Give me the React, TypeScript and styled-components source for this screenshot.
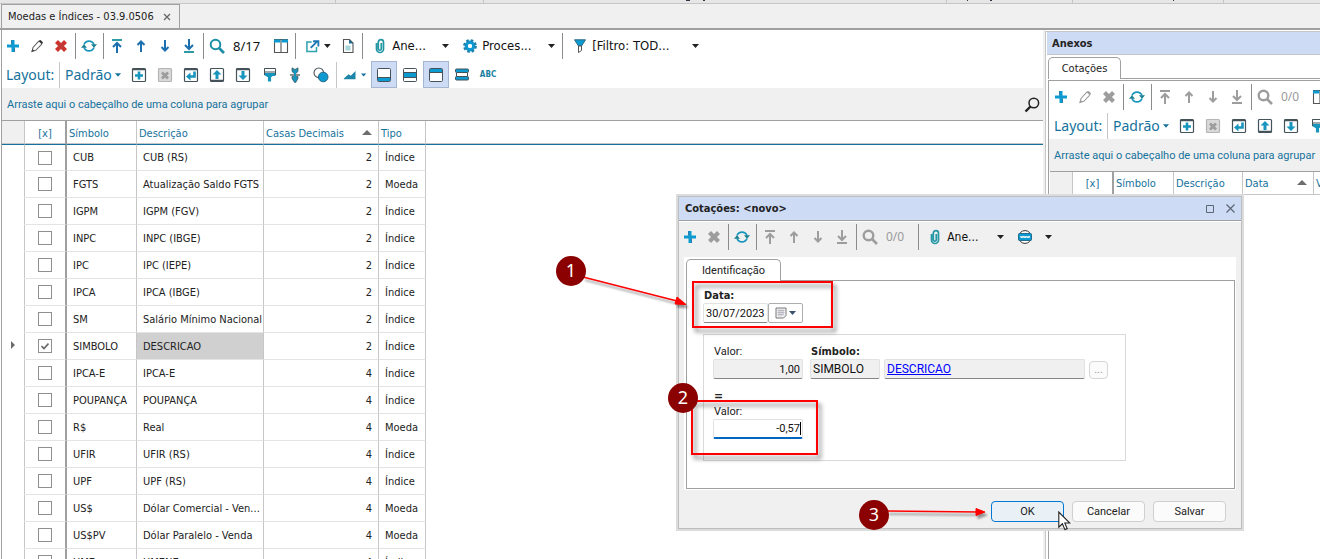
import React from "react";
import styled, { createGlobalStyle, css } from "styled-components";

const UI_FONT = '"DejaVu Sans Condensed", "Noto Sans", sans-serif';
const LIGHT_FONT = '"Noto Sans", "Open Sans", sans-serif';
const FORM_FONT = 'Roboto, "Liberation Sans", sans-serif';

const c = {
  blue: "#16729c",
  teal: "#1795bd",
  bright: "#0d9ad0",
  gray: "#9d9d9d",
  line: "#a0a0a0",
  cell: "#c6c6c6",
  panel: "#f0f0f0",
  title: "#cddbf5",
  ink: "#222222",
  dark: "#44525a",
};

const GlobalStyle = createGlobalStyle`
  * { box-sizing: border-box; }
  body { margin: 0; background: #fff; color: ${c.ink}; font: 11px/14px ${UI_FONT}; }
  button, input { font: inherit; color: inherit; margin: 0; }
`;

const Screen = styled.div`
  position: relative;
  display: flex;
  flex-direction: column;
  height: 100vh;
  overflow: hidden;
`;

const TopStrip = styled.div`
  display: flex;
  height: 4px;
  flex: none;
  background: #e6e6e6;
  border-bottom: 1px solid ${c.cell};
`;

const StripCell = styled.div<{ $w?: number }>`
  display: flex;
  flex: ${(p) => (p.$w ? `0 0 ${p.$w}px` : "1")};
  border-right: ${(p) => (p.$w ? `1px solid ${c.cell}` : "0")};
`;

const Speck = styled.i<{ $gap: number; $w: number }>`
  width: ${(p) => p.$w}px;
  height: 1px;
  margin-left: ${(p) => p.$gap}px;
  background: #3a2f45;
`;

const DocTabs = styled.nav`
  display: flex;
  align-items: flex-end;
  height: 26px;
  flex: none;
  padding-left: 1px;
  background: ${c.panel};
  border-bottom: 2px solid ${c.line};
`;

const DocTab = styled.div`
  display: flex;
  align-items: center;
  gap: 5px;
  height: 24px;
  padding: 1px 4px 0 6px;
  white-space: nowrap;
  border: 1px solid ${c.line};
  border-bottom: 0;
`;

const PlainButton = styled.button`
  display: flex;
  align-items: center;
  justify-content: center;
  border: 0;
  padding: 0;
  background: none;
`;

const CloseButton = styled(PlainButton)`
  width: 16px;
  height: 16px;
`;

const Workspace = styled.div`
  display: flex;
  flex: 1;
  min-height: 0;
`;

const MainPane = styled.main`
  flex: 1;
  min-width: 0;
  margin-left: 1px;
  box-shadow: inset 1px 0 ${c.line};
  overflow: hidden;
`;

const SidePane = styled.aside`
  flex: 0 0 277px;
  border-left: 2px solid ${c.panel};
  overflow: hidden;
`;

const SideBox = styled.section`
  height: 100%;
  margin-top: 1px;
  border-left: 1px solid ${c.cell};
  border-top: 1px solid ${c.cell};
`;

const SideTitle = styled.h2`
  margin: 0 0 0 1px;
  height: 23px;
  padding: 0 5px;
  background: ${c.title};
  border-bottom: 1px solid ${c.cell};
  font-size: 11px;
  line-height: 23px;
`;

const TabRow = styled.div`
  display: flex;
  height: 22px;
  align-items: stretch;
`;

const Tab = styled.div<{ $w: number }>`
  width: ${(p) => p.$w}px;
  border: 1px solid ${c.line};
  border-bottom: 0;
  border-radius: 5px 5px 0 0;
  text-align: center;
  line-height: 21px;
`;

const TabFill = styled.div`
  flex: 1;
  border-bottom: 1px solid ${c.line};
`;

const SideTabs = styled.div`
  padding: 2px 0 0 2px;
  height: 100%;
`;

const SideBody = styled.div`
  height: 100%;
  border-left: 1px solid ${c.line};
`;

const SideGrid = styled.div`
  margin-top: 1px;
  border-top: 1px solid ${c.line};
`;

const ToolRow = styled.div<{ $h: number }>`
  display: flex;
  align-items: center;
  height: ${(p) => p.$h}px;
  white-space: nowrap;
`;

const Tool = styled(PlainButton)<{ $wide?: boolean; $on?: boolean }>`
  flex: 0 0 ${(p) => (p.$wide ? 26 : 24)}px;
  height: 27px;
  ${(p) =>
    p.$on &&
    css`
      background: ${c.title};
      border: 1px solid #a6b5d2;
    `}
`;

const Sep = styled.span<{ $light?: boolean; $gap?: number }>`
  flex: 0 0 4px;
  height: 26px;
  margin-left: ${(p) => p.$gap || 0}px;
  background: linear-gradient(${(p) => (p.$light ? c.cell : "#8c8c8c")}, ${(p) => (p.$light ? c.cell : "#8c8c8c")}) 2px 0 / 1px 100% no-repeat;
`;

const Counter = styled.span<{ $off?: boolean }>`
  padding: 0 9px 0 4px;
  font-size: ${(p) => (p.$off ? 12 : 13)}px;
  color: ${(p) => (p.$off ? "#9a9a9a" : "#111")};
  font-family: ${LIGHT_FONT};
`;

const MenuButton = styled(PlainButton)<{ $w: number; $tight?: boolean }>`
  width: ${(p) => p.$w}px;
  height: 26px;
  padding: 0 5px 0 ${(p) => (p.$tight ? 5 : 8)}px;
  justify-content: flex-start;
  gap: 4px;
  font: 13px/18px ${UI_FONT};
  color: #111;

  svg:last-child {
    margin-left: auto;
  }
`;

const LayoutLabel = styled.span`
  flex: 0 0 56px;
  padding-left: 5px;
  font: 14px/20px ${LIGHT_FONT};
  color: ${c.blue};
`;

const LayoutPick = styled(PlainButton)`
  flex: 0 0 65px;
  justify-content: flex-start;
  gap: 3px;
  padding-left: 4px;
  font: 14px/20px ${LIGHT_FONT};
  color: ${c.blue};
`;

const GroupBar = styled.div<{ $side?: boolean }>`
  display: flex;
  align-items: center;
  justify-content: space-between;
  height: 32px;
  margin-left: ${(p) => (p.$side ? 0 : 1)}px;
  padding: 2px 3px 0 5px;
  background: ${c.panel};
  color: ${c.blue};
  font-family: ${FORM_FONT};
  white-space: nowrap;
`;

const GridWrap = styled.div`
  margin-left: 1px;
  border-top: 1px solid ${c.line};
`;

const Grid = styled.table<{ $w: number }>`
  width: ${(p) => p.$w}px;
  table-layout: fixed;
  border-collapse: separate;
  border-spacing: 0;
`;

const Th = styled.th<{ $mark?: boolean; $thick?: boolean; $center?: boolean }>`
  height: 22px;
  padding: 2px 2px 0;
  border-right: ${(p) => (p.$thick ? `2px solid ${c.line}` : `1px solid ${c.cell}`)};
  background: ${(p) => (p.$mark ? c.panel : "#fff")};
  color: ${c.blue};
  font-weight: 400;
  text-align: ${(p) => (p.$center ? "center" : "left")};
  overflow: hidden;
  white-space: nowrap;

  svg {
    float: right;
    margin: 3px 4px 0 0;
  }
`;

const Td = styled.td<{ $thick?: boolean; $align?: string; $sel?: boolean; $mark?: boolean }>`
  height: 27px;
  padding: ${(p) => (p.$align === "center" ? "0" : "1px 6px 0")};
  border-right: ${(p) => (p.$thick ? `2px solid ${c.line}` : `1px solid ${c.cell}`)};
  border-bottom: 1px solid ${(p) => (p.$mark ? "#fff" : "#e4e4e4")};
  background: ${(p) => (p.$sel ? "#d0d0d0" : "#fff")};
  text-align: ${(p) => p.$align || "left"};
  overflow: hidden;
  text-overflow: ellipsis;
  white-space: nowrap;
`;

const DescTd = styled(Td)`
  padding-right: 0;
`;

const Check = styled.input`
  appearance: none;
  display: block;
  width: 14px;
  height: 14px;
  border: 1px solid #8f8f8f;
  background: #fff;
`;

const CheckLabel = styled.label`
  display: grid;
  justify-content: center;

  > * {
    grid-area: 1 / 1;
  }

  svg {
    margin: 3px;
    pointer-events: none;
  }
`;

/* ---- floating dialog ---- */

const Dialog = styled.section`
  position: absolute;
  left: 676px;
  top: 194px;
  width: 568px;
  border: 2px solid #dcdcdc;
  font-family: ${FORM_FONT};
`;

const DialogInner = styled.div`
  border: 1px solid #bebebe;
  background: ${c.panel};
`;

const DialogTitle = styled.header`
  display: flex;
  align-items: center;
  height: 24px;
  padding: 0 1px 0 6px;
  background: ${c.title};
  border-bottom: 1px solid ${c.line};
  box-shadow: 0 1px #fff;

  h2 {
    flex: 1;
    margin: 0;
    font: bold 11px/14px ${UI_FONT};
  }
`;

const TitleButton = styled(PlainButton)`
  width: 20px;
  height: 20px;
`;

const DialogTools = styled(ToolRow)`
  margin-left: -1px;
  padding-bottom: 4px;
`;

const DialogMenu = styled(MenuButton)`
  padding: 0 6px 0 7px;
  font-size: 12px;
`;

const DialogBody = styled.div`
  margin: 0 5px;
  padding: 2px 1px 1px 2px;
  background: #fff;
`;

const Sheet = styled.div`
  height: 208px;
  padding: 8px 16px;
  border: 1px solid ${c.line};
  border-top: 0;
`;

const FieldLabel = styled.label<{ $strong?: boolean }>`
  display: block;
  height: 14px;
  padding-left: 1px;
  font: ${(p) => (p.$strong ? `bold 11px/14px ${UI_FONT}` : `11px/14px ${FORM_FONT}`)};
`;

const Field = styled.input<{ $w: number; $num?: boolean; $right?: boolean; $focus?: boolean }>`
  display: block;
  width: ${(p) => p.$w}px;
  height: 20px;
  padding: 0 2px;
  border: 1px solid #e2e2e2;
  border-bottom: ${(p) => (p.$focus ? "2px solid #0067c0" : "1px solid #868686")};
  border-radius: 2px;
  outline: 0;
  background: #fff;
  color: #111;
  text-align: ${(p) => (p.$right ? "right" : "left")};
  font: ${(p) => (p.$num ? 11 : 12)}px/16px ${FORM_FONT};

  &:read-only {
    background: ${c.panel};
  }
`;

const LinkField = styled.div`
  width: 201px;
  height: 20px;
  padding: 1px 2px;
  border: 1px solid #e2e2e2;
  border-bottom-color: #868686;
  border-radius: 2px;
  background: ${c.panel};
  font: 12px/16px ${FORM_FONT};

  a {
    color: #0000ff;
  }
`;

const CaretBox = styled.div`
  position: relative;
  width: 90px;

  &::after {
    content: "";
    position: absolute;
    right: 2px;
    top: 3px;
    width: 1px;
    height: 13px;
    background: #000;
  }
`;

const DateRow = styled.div`
  display: flex;
`;

const DateButton = styled(PlainButton)`
  width: 35px;
  height: 20px;
  gap: 2px;
  border: 1px solid #adadad;
  border-radius: 2px;
  background: #fff;
`;

const RateBox = styled.fieldset`
  width: 423px;
  height: 127px;
  margin: 11px 0 0;
  padding: 10px 9px;
  border: 1px solid #d9d9d9;
`;

const FieldRow = styled.div`
  display: flex;
  align-items: flex-end;
`;

const FieldCol = styled.div<{ $gap: number }>`
  margin-right: ${(p) => p.$gap}px;
`;

const MoreButton = styled(PlainButton)`
  width: 19px;
  height: 18px;
  border: 1px solid #d6d6d6;
  border-radius: 4px;
  background: #fbfbfb;
  color: #999;
`;

const Equals = styled.div`
  height: 17px;
  margin-top: 9px;
  padding-left: 1px;
  font: bold 12px/16px ${UI_FONT};
`;

const Footer = styled.footer`
  display: flex;
  justify-content: flex-end;
  gap: 8px;
  padding: 11px 15px 6px;
`;

const DialogButton = styled.button<{ $primary?: boolean }>`
  width: 73px;
  height: 21px;
  padding: 0;
  border: 1px solid ${(p) => (p.$primary ? "#0078d4" : "#cfcfcf")};
  border-radius: 4px;
  background: ${(p) => (p.$primary ? "#e9f0f6" : "#fbfbfb")};
  font: 11px/16px ${FORM_FONT};
`;

/* ---- callouts drawn over the window ---- */

const Highlight = styled.div<{ $x: number; $y: number; $w: number; $h: number }>`
  position: absolute;
  left: ${(p) => p.$x}px;
  top: ${(p) => p.$y}px;
  width: ${(p) => p.$w}px;
  height: ${(p) => p.$h}px;
  border: 2px solid #f00;
  filter: drop-shadow(3px 4px 2px rgba(0, 0, 0, 0.5));
  pointer-events: none;
`;

const Badge = styled.div<{ $x: number; $y: number }>`
  position: absolute;
  left: ${(p) => p.$x}px;
  top: ${(p) => p.$y}px;
  width: 30px;
  height: 30px;
  border-radius: 50%;
  background: #8b0000;
  color: #fff;
  text-align: center;
  font: 18px/29px ${LIGHT_FONT};
`;

const ArrowLayer = styled.svg<{ $x: number; $y: number }>`
  position: absolute;
  left: ${(p) => p.$x}px;
  top: ${(p) => p.$y}px;
  filter: drop-shadow(2px 3px 1px rgba(0, 0, 0, 0.4));
  pointer-events: none;
`;

const Pointer = styled.svg`
  position: absolute;
  left: 1058px;
  top: 511px;
`;

/* ---- icons ---- */

type IconProps = { off?: boolean };

const Svg = ({ children, s = 16 }: { children: React.ReactNode; s?: number }) => (
  <svg width={s} height={s} viewBox={`0 0 ${s} ${s}`} fill="none" aria-hidden="true">
    {children}
  </svg>
);

const PlusIcon = () => (
  <Svg>
    <path d="M8 2v12M2 8h12" stroke={c.bright} strokeWidth="3" />
    <path d="M6.500 2v4.500M9.500 9.500v4.500" stroke="#2f7fae" strokeWidth="1" />
  </Svg>
);
const PencilIcon = ({ off }: IconProps) => (
  <Svg>
    <path d="M3 13.500l1-4 5.500-6c1-1 2-1 3 0s.8 1.800 0 2.800l-5.700 6z" stroke={off ? c.gray : "#666"} strokeWidth="1.100" />
    <path d="M10.500 2.700l2.800 2.500" stroke={off ? c.gray : "#333"} strokeWidth="2" />
    <path d="M2.500 14l1-3 2 1.800z" fill={off ? c.gray : "#444"} />
  </Svg>
);
const CrossIcon = ({ off }: IconProps) => (
  <Svg>
    <path d="M3.500 3.500l9 9M12.500 3.500l-9 9" stroke={off ? c.gray : "#d0312d"} strokeWidth="4.200" />
    <path d="M5 5l6 6M11 5l-6 6" stroke={off ? c.gray : "#c13a36"} strokeWidth="3" />
  </Svg>
);
const RefreshIcon = () => (
  <Svg>
    <path d="M3 6.500A5.400 5.400 0 0 1 13 6.500M13 9.500A5.400 5.400 0 0 1 3 9.500" stroke={c.teal} strokeWidth="1.700" />
    <path d="M10 6.200h6l-3 3.600zM0 9.800h6L3 6.200z" fill="#1b7f8e" />
  </Svg>
);
const ArrowIcon = ({ off, down, bar }: IconProps & { down?: boolean; bar?: boolean }) => {
  const col = off ? c.gray : "#1b6fae";
  return (
    <Svg>
      <g transform={down ? "rotate(180 8 8)" : undefined}>
        {bar && <path d="M3 2h10" stroke={off ? c.gray : "#2f9ba5"} strokeWidth="2" />}
        <path d={bar ? "M8 15V5" : "M8 14V3.500"} stroke={col} strokeWidth="2" />
        <path d={bar ? "M4 9l4-4 4 4" : "M4.500 7L8 3.500 11.500 7"} stroke={col} strokeWidth="2" />
      </g>
    </Svg>
  );
};
const SearchIcon = ({ off }: IconProps) => (
  <Svg>
    <circle cx="6.500" cy="6.500" r="4.800" stroke={off ? c.gray : "#1b8fa6"} strokeWidth={off ? 2.4 : 2} />
    <path d="M10 10l5 5" stroke={off ? c.gray : "#1b8fa6"} strokeWidth="2.600" />
  </Svg>
);
const ColumnsIcon = () => (
  <Svg>
    <path d="M1.500 1.500h13v13h-13zM8 1.500v13" stroke="#555" strokeWidth="1.100" />
    <path d="M1 3h6.300M8.700 3h6.300" stroke={c.bright} strokeWidth="3" />
  </Svg>
);
const ExportIcon = () => (
  <Svg>
    <path d="M7 3.800H2v10h10V9" stroke="#2fa3b0" strokeWidth="1.600" />
    <path d="M6 10L12.500 3.500M8.500 3h5.500v5.500" stroke="#1b76b2" strokeWidth="1.900" />
  </Svg>
);
const PageIcon = () => (
  <Svg>
    <path d="M3.500 1.500h6l3.500 3.500v9.500h-9.500z" stroke="#555" strokeWidth="1.100" />
    <path d="M9 1.500v4h4.500z" fill="#1b6f93" />
    <path d="M5.500 7.500h5v5h-5z" fill="#a8d5d8" />
  </Svg>
);
const ClipIcon = () => (
  <Svg>
    <path d="M4.500 5v6a3.500 3.500 0 0 0 7 0V4.300a2.600 2.600 0 0 0-5.200 0v6.400a1.500 1.500 0 0 0 3 0V5" stroke="#2497a5" strokeWidth="1.700" />
  </Svg>
);
const GearIcon = () => (
  <Svg>
    <circle cx="8" cy="8" r="3.700" stroke={c.bright} strokeWidth="3.400" />
    <circle cx="8" cy="8" r="5.700" stroke="#1e7fb0" strokeWidth="2.400" strokeDasharray="2.600 1.877" />
    <circle cx="8" cy="8" r="2" fill="#fff" />
  </Svg>
);
const FunnelIcon = () => (
  <Svg>
    <path d="M2.500 1.800h11L9.500 8H6.500z" fill={c.bright} stroke="#2c6a87" />
    <path d="M6.500 8h3v4.500l-3 2z" fill="#fff" stroke="#555" />
  </Svg>
);
const WebIcon = () => (
  <Svg>
    <circle cx="8" cy="8" r="6.400" fill="#fff" stroke="#333" />
    <rect x="1.500" y="4.500" width="13" height="7" rx="1" fill={c.bright} stroke="#256d8c" />
    <path d="M3.500 7l.8 2 .8-2 .8 2 .8-2M7.300 9l.7-2 .8 2 .8-2M10.400 9l.7-2 .8 2 .8-2" stroke="#fff" strokeWidth=".9" />
  </Svg>
);
const Caret = ({ color = "#222", w = 7 }: { color?: string; w?: number }) => (
  <svg width={w} height="4" viewBox="0 0 7 4" aria-hidden="true">
    <path d="M0 0h7L3.500 4z" fill={color} />
  </svg>
);
const Frame = ({ children, off }: { children?: React.ReactNode; off?: boolean }) => (
  <Svg>
    <rect x="1.500" y="1.500" width="13" height="13" rx="1" stroke={off ? "#b5b5b5" : "#44525a"} strokeWidth="1.200" fill={off ? "#d9d9d9" : "#fff"} />
    {children}
  </Svg>
);
const FrameAdd = () => (
  <Frame>
    <path d="M2 2.500h12" stroke={c.dark} strokeWidth="1.500" />
    <path d="M8 4.500v8M4 8.500h8" stroke={c.teal} strokeWidth="2.600" />
  </Frame>
);
const FrameDelete = () => (
  <Frame off>
    <path d="M5 5.500l6 6M11 5.500l-6 6" stroke={c.gray} strokeWidth="2.800" />
  </Frame>
);
const FrameReturn = () => (
  <Frame>
    <path d="M2 2.500h12" stroke={c.dark} strokeWidth="1.500" />
    <path d="M11.500 4.500v5H6" stroke={c.teal} strokeWidth="2.600" />
    <path d="M3 9.500l4.500-4v8z" fill={c.teal} />
  </Frame>
);
const FrameArrow = ({ down }: { down?: boolean }) => (
  <Frame>
    <path d={down ? "M2 2.500h12" : "M2 13.500h12"} stroke={c.dark} strokeWidth="1.500" />
    <g transform={down ? "rotate(180 8 8)" : undefined}>
      <path d="M3.500 7.500L8 3l4.500 4.500h-3v4.500h-3V7.500z" fill={c.teal} />
    </g>
  </Frame>
);
const RollerIcon = () => (
  <Svg>
    <path d="M3.500 1.500h11v3.500h-11z" fill="#fff" stroke={c.dark} />
    <path d="M3 6h11.500v3h-3l-1 1h-4l-3.500-2z" fill={c.teal} />
    <path d="M3.500 1.500V8M14.500 2v6" stroke={c.dark} />
    <path d="M8.500 8v6.500" stroke={c.teal} strokeWidth="3.200" />
  </Svg>
);
const CompressIcon = () => (
  <Svg>
    <path d="M5 .8L8 2.500 11 .8V4.500L8 7.300 5 4.500z" fill={c.teal} stroke={c.dark} strokeWidth=".7" />
    <path d="M5 9.500h6v2L8.800 15.400H7.500L5 11.500z" fill={c.teal} stroke={c.dark} strokeWidth=".7" />
    <path d="M3 8h10" stroke={c.dark} strokeWidth="1.300" />
    <path d="M8 6v4" stroke={c.teal} strokeWidth="2" />
  </Svg>
);
const CirclesIcon = () => (
  <Svg>
    <circle cx="5.800" cy="5.800" r="4.800" stroke="#4a555b" strokeWidth="1.100" />
    <circle cx="10.200" cy="10" r="4.800" fill={c.bright} stroke="#2c6a87" />
  </Svg>
);
const ChartIcon = () => (
  <Svg>
    <path d="M1 13v-1l5.500-5L9 9l5.500-5.500V13z" fill="#1d86a8" />
  </Svg>
);
const BoxBand = ({ y, h }: { y: number; h: number }) => (
  <Svg>
    <rect x="1.500" y="1.500" width="13" height="13" rx="1" stroke="#44525a" fill="#fff" />
    <rect x="2" y={y} width="12" height={h} fill={c.bright} />
    <path d={y === 6 ? "M2 5.500h12M2 10.500h12" : y === 2 ? "M2 5.500h12" : "M2 10.500h12"} stroke="#44525a" strokeWidth="1" />
  </Svg>
);
const BandsIcon = () => (
  <Svg>
    <rect x="1.500" y="2" width="13" height="3.500" rx="1" fill={c.bright} stroke="#44525a" />
    <path d="M2.500 6v3.500M13.500 6v3.500" stroke="#44525a" />
    <rect x="1.500" y="9.500" width="13" height="3.500" rx="1" fill={c.bright} stroke="#44525a" />
  </Svg>
);
const AbcText = styled.span`
  font: bold 8px/10px "DejaVu Sans Condensed", sans-serif;
  color: #1b7fa0;
`;
const SortIcon = () => (
  <svg width="10" height="5" viewBox="0 0 10 5" aria-hidden="true">
    <path d="M0 5L5 0l5 5z" fill="#6d6d6d" />
  </svg>
);

/* ---- shared bars ---- */

const NavTools = ({ off, edit = true, count }: { off?: boolean; edit?: boolean; count: string }) => (
  <>
    <Tool aria-label="Novo"><PlusIcon /></Tool>
    {edit && <Tool aria-label="Editar"><PencilIcon off={off} /></Tool>}
    <Tool aria-label="Excluir"><CrossIcon off={off} /></Tool>
    <Sep />
    <Tool aria-label="Atualizar"><RefreshIcon /></Tool>
    <Sep />
    <Tool aria-label="Primeiro"><ArrowIcon off={off} bar /></Tool>
    <Tool aria-label="Anterior"><ArrowIcon off={off} /></Tool>
    <Tool aria-label="Próximo"><ArrowIcon off={off} down /></Tool>
    <Tool aria-label="Último"><ArrowIcon off={off} down bar /></Tool>
    <Sep />
    <Tool aria-label="Pesquisar"><SearchIcon off={off} /></Tool>
    <Counter $off={off}>{count}</Counter>
  </>
);

const LayoutTools = () => (
  <>
    <LayoutLabel>Layout:</LayoutLabel>
    <Sep $light />
    <LayoutPick>Padrão <Caret color={c.blue} w={6} /></LayoutPick>
    <Tool $wide aria-label="Adicionar layout"><FrameAdd /></Tool>
    <Tool $wide aria-label="Excluir layout"><FrameDelete /></Tool>
    <Tool $wide aria-label="Restaurar layout"><FrameReturn /></Tool>
    <Tool $wide aria-label="Exportar layout"><FrameArrow /></Tool>
    <Tool $wide aria-label="Importar layout"><FrameArrow down /></Tool>
    <Tool $wide aria-label="Formatar"><RollerIcon /></Tool>
  </>
);

const rows: [string, string, number, string][] = [
  ["CUB", "CUB (RS)", 2, "Índice"],
  ["FGTS", "Atualização Saldo FGTS", 2, "Moeda"],
  ["IGPM", "IGPM (FGV)", 2, "Índice"],
  ["INPC", "INPC (IBGE)", 2, "Índice"],
  ["IPC", "IPC (IEPE)", 2, "Índice"],
  ["IPCA", "IPCA (IBGE)", 2, "Índice"],
  ["SM", "Salário Mínimo Nacional", 2, "Índice"],
  ["SIMBOLO", "DESCRICAO", 2, "Índice"],
  ["IPCA-E", "IPCA-E", 4, "Índice"],
  ["POUPANÇA", "POUPANÇA", 4, "Índice"],
  ["R$", "Real", 4, "Moeda"],
  ["UFIR", "UFIR (RS)", 4, "Índice"],
  ["UPF", "UPF (RS)", 4, "Índice"],
  ["US$", "Dólar Comercial - Ven...", 4, "Moeda"],
  ["US$PV", "Dólar Paralelo - Venda", 4, "Moeda"],
  ["UME", "UMENE", 4, "Índice"],
];

const mainCols = [23, 42, 70, 127, 115, 47];
const sideCols = [23, 41, 60, 69, 71, 80];

const Cols = ({ widths }: { widths: number[] }) => (
  <colgroup>
    {widths.map((w, i) => (
      <col key={i} style={{ width: w }} />
    ))}
  </colgroup>
);

const sum = (a: number[]) => a.reduce((x, y) => x + y, 0);

const GridArea = styled.div`
  background: linear-gradient(${c.cell}, ${c.cell}) 0 22px / 100% 1px no-repeat,
    linear-gradient(${c.blue}, ${c.blue}) 0 23px / 100% 1px no-repeat;

  th {
    height: 24px;
    border-bottom: 1px solid ${c.blue};
    box-shadow: inset 0 -1px ${c.cell};
  }

  tbody tr:first-child td {
    height: 26px;
  }
`;

const SideGridArea = styled.div`
  border-bottom: 1px solid ${c.cell};
`;

export default function App() {
  return (
    <Screen>
      <GlobalStyle />
      <TopStrip>
        <StripCell $w={336} />
        <StripCell $w={148} />
        <StripCell $w={463}>
          <Speck $gap={202} $w={4} />
          <Speck $gap={13} $w={2} />
        </StripCell>
        <StripCell $w={126}>
          <Speck $gap={20} $w={1} />
          <Speck $gap={22} $w={2} />
        </StripCell>
        <StripCell $w={151}>
          <Speck $gap={100} $w={1} />
        </StripCell>
        <StripCell />
      </TopStrip>
      <DocTabs>
        <DocTab>
          Moedas e Índices - 03.9.0506
          <CloseButton aria-label="Fechar aba">
            <svg width="8" height="8" viewBox="0 0 8 8" aria-hidden="true">
              <path d="M1 1l6 6M7 1L1 7" stroke="#666" strokeWidth="1.300" />
            </svg>
          </CloseButton>
        </DocTab>
      </DocTabs>

      <Workspace>
        <MainPane>
          <ToolRow $h={31}>
            <NavTools count="8/17" />
            <Tool aria-label="Colunas"><ColumnsIcon /></Tool>
            <Sep />
            <MenuButton $w={39} aria-label="Exportar"><ExportIcon /><Caret /></MenuButton>
            <Tool aria-label="Relatório"><PageIcon /></Tool>
            <Sep />
            <MenuButton $w={90}><ClipIcon />Ane...<Caret /></MenuButton>
            <MenuButton $w={106}><GearIcon />Proces...<Caret /></MenuButton>
            <Sep />
            <MenuButton $w={140}><FunnelIcon />[Filtro: TOD...<Caret /></MenuButton>
          </ToolRow>
          <ToolRow $h={27}>
            <LayoutTools />
            <Tool $wide aria-label="Ajustar"><CompressIcon /></Tool>
            <Tool $wide aria-label="Combinar"><CirclesIcon /></Tool>
            <Sep $light />
            <MenuButton $w={33} $tight aria-label="Gráfico"><ChartIcon /><Caret color={c.blue} w={6} /></MenuButton>
            <Tool $wide $on aria-label="Rodapé"><BoxBand y={11} h={3} /></Tool>
            <Tool $wide aria-label="Grupo"><BoxBand y={6} h={4} /></Tool>
            <Tool $wide $on aria-label="Cabeçalho"><BoxBand y={2} h={3} /></Tool>
            <Tool $wide aria-label="Faixas"><BandsIcon /></Tool>
            <Tool $wide><AbcText>ABC</AbcText></Tool>
          </ToolRow>
          <GroupBar>
            Arraste aqui o cabeçalho de uma coluna para agrupar
            <PlainButton aria-label="Localizar">
              <svg width="16" height="16" viewBox="0 0 16 16" fill="none" aria-hidden="true">
                <circle cx="9.800" cy="6" r="4.800" stroke="#222" strokeWidth="1.500" />
                <path d="M6.500 9.500L1.500 14.500" stroke="#222" strokeWidth="2.400" />
              </svg>
            </PlainButton>
          </GroupBar>
          <GridWrap>
            <GridArea>
              <Grid $w={sum(mainCols)}>
                <Cols widths={mainCols} />
                <thead>
                  <tr>
                    <Th $mark aria-label="Linha atual" />
                    <Th $center $thick>[x]</Th>
                    <Th>Símbolo</Th>
                    <Th>Descrição</Th>
                    <Th>Casas Decimais <SortIcon /></Th>
                    <Th>Tipo</Th>
                  </tr>
                </thead>
                <tbody>
                  {rows.map(([sym, desc, dec, tipo], i) => (
                    <tr key={sym}>
                      <Td $mark $align="center">
                        {i === 7 && (
                          <svg width="4" height="8" viewBox="0 0 4 8" aria-hidden="true">
                            <path d="M0 0l4 4-4 4z" fill="#6d6d6d" />
                          </svg>
                        )}
                      </Td>
                      <Td $thick $align="center">
                        <CheckLabel>
                          <Check type="checkbox" aria-label={sym} defaultChecked={i === 7} />
                          {i === 7 && (
                            <svg width="8" height="8" viewBox="0 0 8 8" fill="none" aria-hidden="true">
                              <path d="M.5 4l2.500 2.500L7.500 1.500" stroke="#666" strokeWidth="1.600" />
                            </svg>
                          )}
                        </CheckLabel>
                      </Td>
                      <Td>{sym}</Td>
                      <DescTd $sel={i === 7}>{desc}</DescTd>
                      <Td $align="right">{dec}</Td>
                      <Td>{tipo}</Td>
                    </tr>
                  ))}
                </tbody>
              </Grid>
            </GridArea>
          </GridWrap>
        </MainPane>

        <SidePane>
          <SideBox>
            <SideTitle>Anexos</SideTitle>
            <SideTabs>
              <TabRow>
                <Tab $w={73}>Cotações</Tab>
                <TabFill />
              </TabRow>
              <SideBody>
                <SideGrid>
                  <ToolRow $h={31}>
                    <NavTools off count="0/0" />
                    <Tool aria-label="Colunas"><ColumnsIcon /></Tool>
                  </ToolRow>
                  <ToolRow $h={27}>
                    <LayoutTools />
                  </ToolRow>
                  <GroupBar $side>Arraste aqui o cabeçalho de uma coluna para agrupar</GroupBar>
                </SideGrid>
                <GridWrap>
                  <SideGridArea>
                    <Grid $w={sum(sideCols)}>
                      <Cols widths={sideCols} />
                      <thead>
                        <tr>
                          <Th $mark aria-label="Linha atual" />
                          <Th $center $thick>[x]</Th>
                          <Th>Símbolo</Th>
                          <Th>Descrição</Th>
                          <Th>Data <SortIcon /></Th>
                          <Th>Valor</Th>
                        </tr>
                      </thead>
                    </Grid>
                  </SideGridArea>
                </GridWrap>
              </SideBody>
            </SideTabs>
          </SideBox>
        </SidePane>
      </Workspace>

      <Dialog role="dialog" aria-label="Cotações">
        <DialogInner>
          <DialogTitle>
            <h2>Cotações: &lt;novo&gt;</h2>
            <TitleButton aria-label="Maximizar">
              <svg width="8" height="8" viewBox="0 0 8 8" fill="none" aria-hidden="true">
                <path d="M.5.5h7v7h-7z" stroke="#5d6674" />
              </svg>
            </TitleButton>
            <TitleButton aria-label="Fechar">
              <svg width="9" height="9" viewBox="0 0 9 9" fill="none" aria-hidden="true">
                <path d="M.5.5l8 8M8.500.5l-8 8" stroke="#5d6674" strokeWidth="1.200" />
              </svg>
            </TitleButton>
          </DialogTitle>
          <DialogTools $h={36}>
            <NavTools off edit={false} count="0/0" />
            <Sep $gap={3} />
            <DialogMenu $w={90}><ClipIcon />Ane...<Caret /></DialogMenu>
            <DialogMenu $w={48} aria-label="Web"><WebIcon /><Caret /></DialogMenu>
          </DialogTools>
          <DialogBody>
            <TabRow>
              <Tab $w={95}>Identificação</Tab>
              <TabFill />
            </TabRow>
            <Sheet>
              <FieldLabel $strong htmlFor="data">Data:</FieldLabel>
              <DateRow>
                <Field id="data" $w={65} $num defaultValue="30/07/2023" />
                <DateButton aria-label="Abrir calendário">
                  <svg width="12" height="12" viewBox="0 0 12 12" fill="none" aria-hidden="true">
                    <path d="M1 1h10v7.500L8.500 11H1z" fill="#f3f3f3" stroke="#777" />
                    <path d="M2.500 3.500h7M2.500 5.500h7M2.500 7.500h6M4 2.500v7M6 2.500v7M8 2.500v6" stroke="#b0b0bc" strokeWidth=".8" />
                  </svg>
                  <Caret color="#3d4f6e" />
                </DateButton>
              </DateRow>
              <RateBox>
                <FieldRow>
                  <FieldCol $gap={7}>
                    <FieldLabel htmlFor="valor1">Valor:</FieldLabel>
                    <Field id="valor1" $w={90} $num $right readOnly defaultValue="1,00" />
                  </FieldCol>
                  <FieldCol $gap={4}>
                    <FieldLabel $strong htmlFor="simbolo">Símbolo:</FieldLabel>
                    <Field id="simbolo" $w={70} readOnly defaultValue="SIMBOLO" />
                  </FieldCol>
                  <FieldCol $gap={4}>
                    <LinkField><a href="#descricao">DESCRICAO</a></LinkField>
                  </FieldCol>
                  <MoreButton>...</MoreButton>
                </FieldRow>
                <Equals>=</Equals>
                <FieldLabel htmlFor="valor2">Valor:</FieldLabel>
                <CaretBox>
                  <Field id="valor2" $w={90} $num $right $focus defaultValue="-0,57" />
                </CaretBox>
              </RateBox>
            </Sheet>
          </DialogBody>
          <Footer>
            <DialogButton $primary>OK</DialogButton>
            <DialogButton>Cancelar</DialogButton>
            <DialogButton>Salvar</DialogButton>
          </Footer>
        </DialogInner>
      </Dialog>

      <Highlight $x={692} $y={281} $w={141} $h={47} />
      <Highlight $x={691} $y={400} $w={127} $h={55} />
      <ArrowLayer $x={580} $y={270} width="110" height="44" aria-hidden="true">
        <path d="M3 7l94 24" stroke="#f00" strokeWidth="1.500" />
        <path d="M95 34l2-7 9 7.500z" fill="#f00" stroke="#f00" />
      </ArrowLayer>
      <ArrowLayer $x={885} $y={500} width="104" height="24" aria-hidden="true">
        <path d="M2 11l92 1" stroke="#f00" strokeWidth="1.500" />
        <path d="M91 8.500v7l9-3.500z" fill="#f00" stroke="#f00" />
      </ArrowLayer>
      <Badge $x={556} $y={256}>1</Badge>
      <Badge $x={668} $y={383}>2</Badge>
      <Badge $x={859} $y={500}>3</Badge>
      <Pointer width="13" height="20" viewBox="0 0 13 20" aria-hidden="true">
        <path d="M.8 1v15.200l3.600-3.400 2.500 5.800 2.300-1-2.400-5.600h5z" fill="#fff" stroke="#222" strokeWidth="1.100" />
      </Pointer>
    </Screen>
  );
}
